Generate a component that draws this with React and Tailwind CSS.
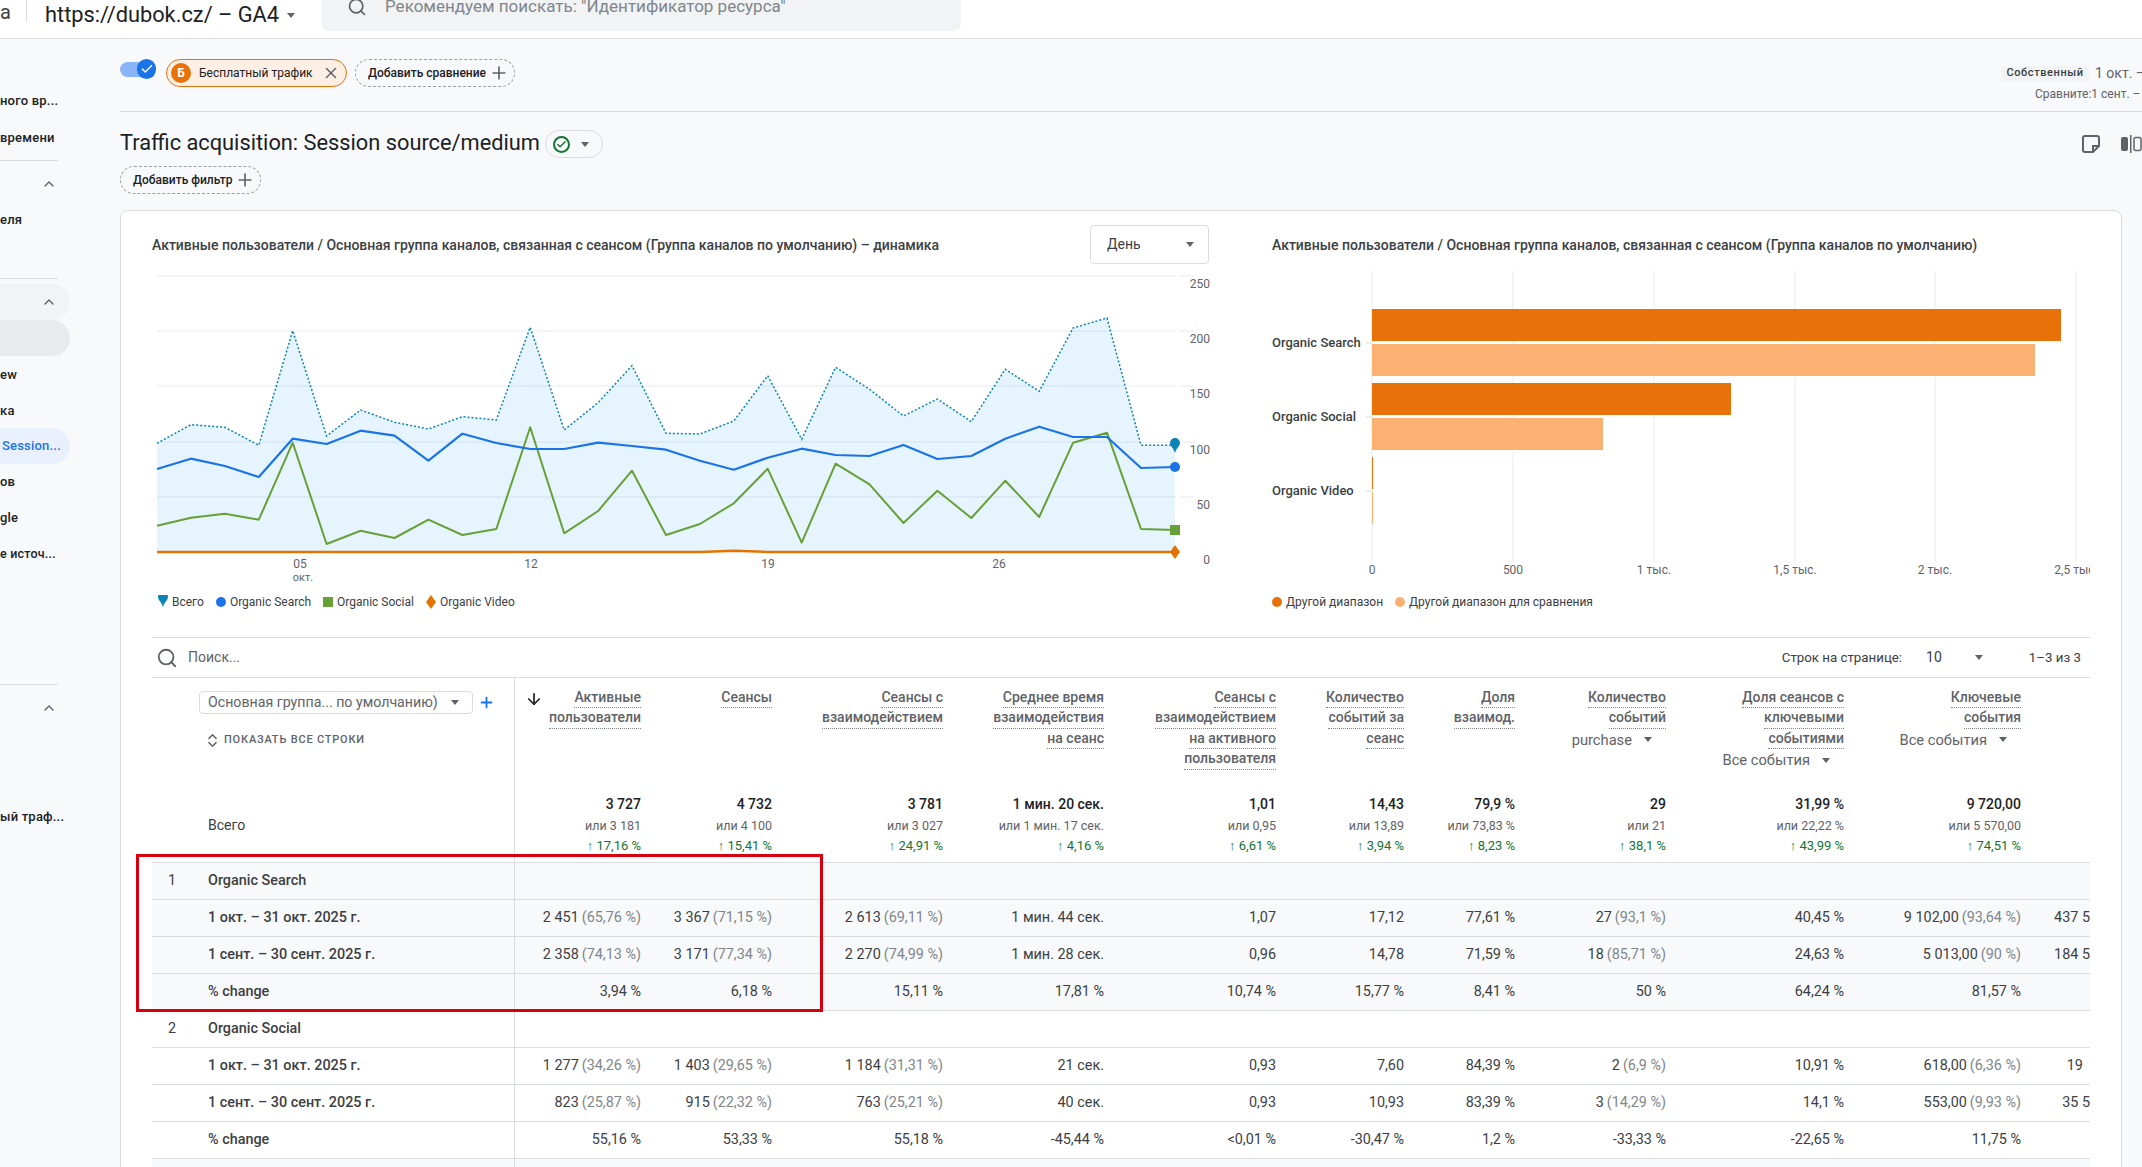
import { Search, X, Plus, ChevronUp, ArrowDown, Check, ChevronsUpDown } from 'lucide-react';

const COLS = 'grid grid-cols-[363px_126px_131px_171px_161px_172px_128px_111px_151px_178px_177px_69px]';

const Caret = ({ className = '' }) => (
  <svg width="8" height="5" viewBox="0 0 8 5" className={`shrink-0 ${className}`}>
    <path d="M0 0h8L4 5z" fill="#5f6368" />
  </svg>
);

const SideRow = ({ children, chevron, className = '' }) => (
  <div className={`h-9 w-[70px] flex items-center justify-between whitespace-nowrap overflow-hidden rounded-r-full ${className}`}>
    <span>{children}</span>
    {chevron && <ChevronUp size={16} className="mr-[13px] text-[#5f6368]" />}
  </div>
);

const Sidebar = () => (
  <div className="w-[120px] shrink-0 pt-[44px] text-[13px] font-medium tracking-[0.2px] text-[#202124]">
    <SideRow>ного вр...</SideRow>
    <SideRow className="mt-px">времени</SideRow>
    <div className="w-[58px] h-px bg-[#dadce0] mt-1" />
    <SideRow chevron className="mt-[5px]"> </SideRow>
    <SideRow>еля</SideRow>
    <div className="w-[58px] h-px bg-[#dadce0] mt-[40px]" />
    <SideRow chevron className="mt-[5px] bg-[#f1f3f4]"> </SideRow>
    <SideRow className="bg-[#e8eaed]"> </SideRow>
    <SideRow className="mt-px">ew</SideRow>
    <SideRow>ка</SideRow>
    <SideRow className="-mt-px pl-[2px] bg-[#e8f0fe] text-[#1a73e8]">Session...</SideRow>
    <SideRow>ов</SideRow>
    <SideRow>gle</SideRow>
    <SideRow className="text-[12.5px]">е источ...</SideRow>
    <div className="w-[58px] h-px bg-[#dadce0] mt-[112px]" />
    <SideRow chevron className="mt-[5px]"> </SideRow>
    <SideRow className="mt-[73px]">ый траф...</SideRow>
  </div>
);

const total = [670, 614, 622, 676, 332, 648, 570, 607, 627, 590, 600, 322, 630, 548, 437, 640, 642, 603, 467, 658, 442, 508, 588, 537, 605, 448, 514, 324, 294, 676, 676];
const organic = [747, 716, 738, 771, 656, 672, 632, 647, 722, 641, 669, 687, 687, 668, 678, 689, 722, 749, 713, 686, 705, 708, 675, 717, 708, 656, 620, 651, 651, 744, 741];
const social = [917, 893, 881, 899, 668, 972, 932, 954, 899, 945, 927, 622, 940, 873, 752, 945, 912, 850, 746, 968, 731, 793, 909, 812, 894, 782, 891, 668, 638, 927, 930];
const video = total.map((_, i) => (i === 17 ? 992 : 996));

const px = (i) => 157 + i * 33.93;
const py = (v) => 220 + v / 3;
const line = (arr) => arr.map((v, i) => `${px(i).toFixed(1)},${py(v).toFixed(1)}`).join(' ');

const pin = (x, y) => `M${x - 5} ${y - 3}a5 5 0 0 1 10 0c0 3-3 4-5 10c-2-6-5-7-5-10z`;

const LineChart = () => (
  <svg width="1119" height="326" viewBox="121 264 1119 326" className="block">
    {[276, 331, 386, 442, 497].map((y) => (
      <g key={y} stroke="#e8eaed">
        <line x1="157" x2="1176" y1={y} y2={y} />
        <line x1="1179" x2="1194" y1={y} y2={y} />
      </g>
    ))}
    <polygon points={`157,552 ${line(total)} 1175,552`} fill="#0b9be8" fillOpacity="0.1" />
    <polyline points={line(total)} fill="none" stroke="#0b83b5" strokeWidth="1.5" strokeDasharray="2 2" />
    <polyline points={line(social)} fill="none" stroke="#689f38" strokeWidth="2" strokeLinejoin="round" />
    <polyline points={line(organic)} fill="none" stroke="#1a73e8" strokeWidth="2.2" strokeLinejoin="round" />
    <polyline points={line(video)} fill="none" stroke="#e37400" strokeWidth="2.5" />
    <path d={pin(1175, 446)} fill="#0b83b5" />
    <circle cx="1175" cy="467" r="5" fill="#1a73e8" />
    <rect x="1170" y="525" width="10" height="10" fill="#689f38" />
    <path d="M1175 545l5 7l-5 7l-5-7z" fill="#e37400" />
    <g fontSize="12" fill="#5f6368" textAnchor="end">
      {[['250', 288], ['200', 343], ['150', 398], ['100', 454], ['50', 509], ['0', 564]].map(([t, y]) => (
        <text key={t} x="1210" y={y}>{t}</text>
      ))}
    </g>
    <g fontSize="12" fill="#5f6368" textAnchor="middle">
      <text x="300" y="568">05</text>
      <text x="303" y="581" fontSize="11">окт.</text>
      <text x="531" y="568">12</text>
      <text x="768" y="568">19</text>
      <text x="999" y="568">26</text>
    </g>
  </svg>
);

const barX = [1372, 1513, 1654, 1795, 1935, 2076];
const barLabels = ['0', '500', '1 тыс.', '1,5 тыс.', '2 тыс.', '2,5 тыс.'];
const bars = [
  { y: 309, w: 689, c: '#e8710a' },
  { y: 344, w: 663, c: '#fcb071' },
  { y: 383, w: 359, c: '#e8710a' },
  { y: 418, w: 231, c: '#fcb071' },
  { y: 457, w: 1, c: '#e8710a' },
  { y: 492, w: 1, c: '#fcb071' },
];

const BarChart = () => (
  <svg width="850" height="326" viewBox="1240 264 850 326" className="block">
    {barX.map((x) => (
      <line key={x} x1={x} x2={x} y1="271" y2="562" stroke="#e8eaed" />
    ))}
    {bars.map((b) => (
      <rect key={b.y} x="1372" y={b.y} width={b.w} height="32" fill={b.c} />
    ))}
    {[['Organic Search', 342], ['Organic Social', 416], ['Organic Video', 490]].map(([t, y]) => (
      <g key={t}>
        <line x1="1366" x2="1372" y1={y + 1} y2={y + 1} stroke="#dadce0" />
        <text x="1272" y={y + 5} fontSize="13" fontWeight="500" fill="#3c4043">{t}</text>
      </g>
    ))}
    {barX.map((x, i) => (
      <text key={x} x={x} y="574" fontSize="12" fill="#5f6368" textAnchor="middle">{barLabels[i]}</text>
    ))}
  </svg>
);

const Legend = ({ items, className = '' }) => (
  <div className={`flex items-center h-[24px] text-[12px] text-[#3c4043] ${className}`}>
    {items.map((it) => (
      <div key={it.label} className="flex items-center mr-[11px]">
        <svg width="12" height="14" viewBox="0 0 12 14" className="mr-[3px]">{it.icon}</svg>
        {it.label}
      </div>
    ))}
  </div>
);

const HeadCell = ({ lines, arrow, pick }) => (
  <div className="relative flex flex-col items-end pt-[10px]">
    {arrow && <ArrowDown size={18} strokeWidth={2.25} className="absolute left-[10px] top-[12px] text-[#202124]" />}
    {lines.map((l) => (
      <span key={l} className="h-[20.4px] leading-[19px] font-medium text-[#5f6368] border-b border-dotted border-[#80868b]">{l}</span>
    ))}
    {pick && (
      <div className="flex items-center gap-[12px] mr-[14px] mt-[1px] h-[20px] text-[14.7px] text-[#5f6368]">
        {pick}
        <Caret />
      </div>
    )}
  </div>
);

const TotalCell = ({ a, b, c }) => (
  <div className="flex flex-col items-end pt-[7px]">
    <span className="h-[18px] leading-[18px] font-medium text-[#202124]">{a}</span>
    <span className="h-[20px] mt-[3px] leading-[20px] text-[12.5px] text-[#5f6368]">{b}</span>
    <span className="h-[20px] leading-[20px] text-[13px] text-[#137333]">↑ {c}</span>
  </div>
);

const heads = [
  { lines: ['Активные', 'пользователи'], arrow: true },
  { lines: ['Сеансы'] },
  { lines: ['Сеансы с', 'взаимодействием'] },
  { lines: ['Среднее время', 'взаимодействия', 'на сеанс'] },
  { lines: ['Сеансы с', 'взаимодействием', 'на активного', 'пользователя'] },
  { lines: ['Количество', 'событий за', 'сеанс'] },
  { lines: ['Доля', 'взаимод.'] },
  { lines: ['Количество', 'событий'], pick: 'purchase' },
  { lines: ['Доля сеансов с', 'ключевыми', 'событиями'], pick: 'Все события' },
  { lines: ['Ключевые', 'события'], pick: 'Все события' },
];

const totals = [
  ['3 727', 'или 3 181', '17,16 %'],
  ['4 732', 'или 4 100', '15,41 %'],
  ['3 781', 'или 3 027', '24,91 %'],
  ['1 мин. 20 сек.', 'или 1 мин. 17 сек.', '4,16 %'],
  ['1,01', 'или 0,95', '6,61 %'],
  ['14,43', 'или 13,89', '3,94 %'],
  ['79,9 %', 'или 73,83 %', '8,23 %'],
  ['29', 'или 21', '38,1 %'],
  ['31,99 %', 'или 22,22 %', '43,99 %'],
  ['9 720,00', 'или 5 570,00', '74,51 %'],
];

const OCT = '1 окт. – 31 окт. 2025 г.';
const SEP = '1 сент. – 30 сент. 2025 г.';

const rows = [
  { rank: '1', label: 'Organic Search', gray: true, cells: [] },
  { label: OCT, gray: true, cells: [['2 451', '65,76 %'], ['3 367', '71,15 %'], ['2 613', '69,11 %'], ['1 мин. 44 сек.'], ['1,07'], ['17,12'], ['77,61 %'], ['27', '93,1 %'], ['40,45 %'], ['9 102,00', '93,64 %'], ['437 5']] },
  { label: SEP, gray: true, cells: [['2 358', '74,13 %'], ['3 171', '77,34 %'], ['2 270', '74,99 %'], ['1 мин. 28 сек.'], ['0,96'], ['14,78'], ['71,59 %'], ['18', '85,71 %'], ['24,63 %'], ['5 013,00', '90 %'], ['184 5']] },
  { label: '% change', gray: true, cells: [['3,94 %'], ['6,18 %'], ['15,11 %'], ['17,81 %'], ['10,74 %'], ['15,77 %'], ['8,41 %'], ['50 %'], ['64,24 %'], ['81,57 %']] },
  { rank: '2', label: 'Organic Social', cells: [] },
  { label: OCT, cells: [['1 277', '34,26 %'], ['1 403', '29,65 %'], ['1 184', '31,31 %'], ['21 сек.'], ['0,93'], ['7,60'], ['84,39 %'], ['2', '6,9 %'], ['10,91 %'], ['618,00', '6,36 %'], ['19\u00a0\u00a0']] },
  { label: SEP, cells: [['823', '25,87 %'], ['915', '22,32 %'], ['763', '25,21 %'], ['40 сек.'], ['0,93'], ['10,93'], ['83,39 %'], ['3', '14,29 %'], ['14,1 %'], ['553,00', '9,93 %'], ['35 5']] },
  { label: '% change', cells: [['55,16 %'], ['53,33 %'], ['55,18 %'], ['-45,44 %'], ['<0,01 %'], ['-30,47 %'], ['1,2 %'], ['-33,33 %'], ['-22,65 %'], ['11,75 %']] },
  { gray: true, cells: [] },
];

const Row = ({ row }) => (
  <div className={`${COLS} h-[37px] border-b border-[#dadce0] text-[14.4px] ${row.gray ? 'bg-[#f8f9fa]' : 'bg-white'}`}>
    <div className="flex items-center border-r border-[#dadce0] font-medium text-[#3c4043]">
      <span className="w-[56px] pl-[16px] font-normal">{row.rank}</span>
      <span>{row.label}</span>
    </div>
    {row.cells.map((c, i) => (
      <div key={i} className="flex items-center justify-end whitespace-nowrap overflow-hidden text-[#3c4043]">
        {c[0]}
        {c[1] && <span className="ml-[3px] text-[#80868b]">({c[1]})</span>}
      </div>
    ))}
  </div>
);

const Table = () => (
  <div className="ml-[31px] w-[1938px] border-t border-[#dadce0] text-[14px]">
    <div className="h-[40px] flex items-center border-b border-[#dadce0] text-[#5f6368]">
      <Search size={22} className="ml-[4px] mr-[10px] text-[#5f6368]" />
      <span>Поиск...</span>
      <div className="ml-auto flex items-center text-[13.3px] text-[#3c4043]">
        <span>Строк на странице:</span>
        <span className="ml-[24px] text-[14px]">10</span>
        <Caret className="ml-[33px]" />
        <span className="ml-[46px] mr-[9px]">1–3 из 3</span>
      </div>
    </div>
    <div className={`${COLS} h-[110px]`}>
      <div className="border-r border-[#dadce0] pl-[47px] pt-[13px]">
        <div className="flex items-center">
          <div className="w-[274px] h-[23px] flex items-center justify-between pl-[8px] pr-[13px] border border-[#dadce0] rounded text-[14.2px] text-[#5f6368]">
            Основная группа... по умолчанию)
            <Caret />
          </div>
          <Plus size={17} strokeWidth={2.5} className="ml-[5px] text-[#1a73e8]" />
        </div>
        <div className="flex items-center mt-[18px] ml-[5px] text-[11px] font-medium tracking-[0.8px] text-[#5f6368]">
          <ChevronsUpDown size={17} className="mr-[3px]" />
          ПОКАЗАТЬ ВСЕ СТРОКИ
        </div>
      </div>
      {heads.map((h) => (
        <HeadCell key={h.lines.join()} {...h} />
      ))}
    </div>
    <div className={`${COLS} h-[75px] border-b border-[#dadce0]`}>
      <div className="flex items-center border-r border-[#dadce0] pl-[56px] text-[#3c4043]">Всего</div>
      {totals.map((t) => (
        <TotalCell key={t[0]} a={t[0]} b={t[1]} c={t[2]} />
      ))}
    </div>
    {rows.map((r, i) => (
      <Row key={i} row={r} />
    ))}
  </div>
);

export default function App() {
  return (
    <div className="relative w-[2142px] h-[1167px] overflow-hidden bg-[#f8f9fb] [font-family:Roboto,sans-serif]">
      <header className="h-[39px] bg-white border-b border-[#dadce0] flex items-start">
        <span className="w-[27px] h-[22px] border-r border-[#dadce0] text-[20px] leading-[24px] text-[#3c4043]">a</span>
        <div className="ml-[18px] w-[276px] flex items-center gap-[8px] mt-[2px]">
          <span className="text-[21.8px] leading-[26px] text-[#202124]">https://dubok.cz/ – GA4</span>
          <Caret />
        </div>
        <div className="w-[640px] h-[31px] bg-[#f1f3f4] rounded-b-lg flex items-start pl-[26px] text-[17px] text-[#80868b]">
          <Search size={20} className="-mt-[3px] mr-[18px] text-[#5f6368]" />
          <span className="-mt-[6px] leading-[24px]">Рекомендуем поискать: "Идентификатор ресурса"</span>
        </div>
      </header>

      <div className="flex">
        <Sidebar />
        <main className="flex-1 min-w-0">
          <div className="h-[73px] border-b border-[#dadce0] flex items-start pt-5 text-[12px] font-medium text-[#202124]">
            <div className="relative w-[36px] h-[22px] mr-[10px]">
              <div className="w-[30px] h-[15px] mt-[3px] rounded-full bg-[#8ab4f8]" />
              <div className="absolute right-0 top-0 w-[19px] h-[20px] rounded-full bg-[#1a73e8] flex items-center justify-center">
                <Check size={14} strokeWidth={2.5} className="text-white" />
              </div>
            </div>
            <div className="w-[181px] h-[28px] flex items-center rounded-full border border-[#e8710a] bg-[#fdefe3] pl-[4px]">
              <span className="w-[20px] h-[20px] rounded-full bg-[#e8710a] text-white flex items-center justify-center font-bold text-[12px]">Б</span>
              <span className="ml-[8px] font-normal">Бесплатный трафик</span>
              <X size={18} className="ml-[9px] text-[#5f6368]" />
            </div>
            <div className="ml-[8px] w-[160px] h-[28px] flex items-center rounded-full border border-dashed border-[#9aa0a6] pl-[12px]">
              Добавить сравнение
              <Plus size={20} className="ml-[3px] text-[#5f6368]" />
            </div>
            <div className="ml-auto w-[141px] whitespace-nowrap">
              <div className="flex items-center h-[17px] mt-[6px]">
                <span className="w-[88px] h-[16px] shrink-0 flex items-center justify-center bg-[#f1f3f4] text-[11px] font-medium tracking-[0.6px] text-[#3c4043]">Собственный</span>
                <span className="ml-[6px] text-[14px] font-normal text-[#5f6368]">1 окт. – 31 окт. 2025 г.</span>
              </div>
              <div className="pl-[34px] mt-[3px] text-[12px] font-normal text-[#5f6368]">Сравните:1 сент. – 30 сент. 2025 г.</div>
            </div>
          </div>

          <div className="flex items-center h-[28px] mt-[18px]">
            <h1 className="-mt-px text-[21.8px] font-normal text-[#202124]">Traffic acquisition: Session source/medium</h1>
            <div className="ml-[5px] w-[58px] h-[28px] rounded-full border border-[#dadce0] flex items-center pl-[7px] gap-[11px]">
              <span className="w-[17px] h-[17px] rounded-full border-2 border-[#137333] flex items-center justify-center">
                <Check size={11} strokeWidth={3} className="text-[#137333]" />
              </span>
              <Caret />
            </div>
            <div className="ml-auto flex items-center gap-[21px] w-[60px]">
              <svg width="18" height="18" viewBox="0 0 18 18" className="shrink-0">
                <path d="M1 3a2 2 0 0 1 2-2h12a2 2 0 0 1 2 2v8l-6 6H3a2 2 0 0 1-2-2z M11 17v-6h6" fill="none" stroke="#5f6368" strokeWidth="2" />
              </svg>
              <svg width="21" height="18" viewBox="0 0 21 18" className="shrink-0">
                <rect x="0" y="2" width="7" height="14" rx="2" fill="#5f6368" />
                <rect x="9" y="0" width="1.5" height="18" fill="#5f6368" />
                <rect x="13" y="2.5" width="7" height="13" rx="2" fill="none" stroke="#5f6368" strokeWidth="1.5" />
              </svg>
            </div>
          </div>

          <div className="mt-[8px] w-[141px] h-[28px] flex items-center rounded-full border border-dashed border-[#9aa0a6] pl-[12px] text-[12px] font-medium text-[#202124]">
            Добавить фильтр
            <Plus size={20} className="ml-[3px] text-[#5f6368]" />
          </div>

          <section className="mt-[16px] w-[2002px] h-[1000px] bg-white border border-[#dadce0] rounded-t-lg">
            <div className="flex h-[426px]">
              <div className="w-[1119px] pt-[14px]">
                <div className="h-[39px] flex items-center justify-between pl-[31px] pr-[31px]">
                  <h2 className="mt-[2px] text-[14px] font-medium text-[#3c4043]">Активные пользователи / Основная группа каналов, связанная с сеансом (Группа каналов по умолчанию) – динамика</h2>
                  <div className="w-[119px] h-[39px] flex items-center justify-between pl-[16px] pr-[14px] border border-[#dadce0] rounded text-[14px] text-[#3c4043]">
                    День
                    <Caret />
                  </div>
                </div>
                <LineChart />
                <Legend
                  className="pl-[36px]"
                  items={[
                    { label: 'Всего', icon: <path d={pin(6, 5)} fill="#0b83b5" /> },
                    { label: 'Organic Search', icon: <circle cx="6" cy="7" r="5" fill="#1a73e8" /> },
                    { label: 'Organic Social', icon: <rect x="1" y="2" width="10" height="10" fill="#689f38" /> },
                    { label: 'Organic Video', icon: <path d="M6 0l5 7l-5 7l-5-7z" fill="#e37400" /> },
                  ]}
                />
              </div>
              <div className="flex-1 pt-[14px]">
                <div className="h-[39px] flex items-center pl-[32px]">
                  <h2 className="mt-[2px] text-[14px] font-medium text-[#3c4043]">Активные пользователи / Основная группа каналов, связанная с сеансом (Группа каналов по умолчанию)</h2>
                </div>
                <BarChart />
                <Legend
                  className="pl-[31px]"
                  items={[
                    { label: 'Другой диапазон', icon: <circle cx="6" cy="7" r="5" fill="#e8710a" /> },
                    { label: 'Другой диапазон для сравнения', icon: <circle cx="6" cy="7" r="5" fill="#fcb071" /> },
                  ]}
                />
              </div>
            </div>
            <Table />
          </section>
        </main>
      </div>

      {/* рамка-выделение поверх таблицы */}
      <div className="absolute left-[136px] top-[854px] w-[687px] h-[158px] border-[3px] border-[#d8000c] pointer-events-none" />
    </div>
  );
}
